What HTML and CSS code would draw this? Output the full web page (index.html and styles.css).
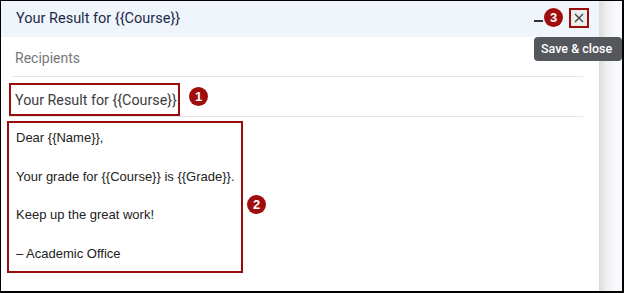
FILE: index.html
```html
<!DOCTYPE html>
<html>
<head>
<meta charset="utf-8">
<link rel="stylesheet" href="styles.css">
</head>
<body>
<div class="frame">
  <div class="panel">
    <div class="header">
      <div class="title">Your Result for {{Course}}</div>
      <div class="controls">
        <span class="minimize"></span>
        <span class="close">
          <svg width="12" height="12" viewBox="0 0 12 12"><path d="M2 2 L10 10 M10 2 L2 10" stroke="#444" stroke-width="1.4" fill="none"/></svg>
        </span>
        <span class="badge badge3">3</span>
      </div>
    </div>
    <div class="row recipients">Recipients</div>
    <div class="row subject-row">
      <div class="subject">Your Result for {{Course}}</div>
      <span class="badge badge1">1</span>
    </div>
    <div class="body-wrap">
      <div class="body-box">
        <p>Dear {{Name}},</p>
        <p>Your grade for {{Course}} is {{Grade}}.</p>
        <p>Keep up the great work!</p>
        <p>– Academic Office</p>
      </div>
      <span class="badge badge2">2</span>
    </div>
  </div>
  <div class="shade"></div>
  <div class="side"></div>
  <div class="tooltip">Save &amp; close</div>
</div>
</body>
</html>
```
FILE: styles.css
```css
html, body { margin: 0; padding: 0; background: #fff; }
.frame {
  position: relative;
  width: 624px;
  height: 293px;
  box-sizing: border-box;
  border: 1px solid #000;
  border-right-width: 2px;
  border-bottom-width: 2px;
  display: flex;
  overflow: hidden;
  font-family: Roboto, "Liberation Sans", sans-serif;
}
.panel {
  width: 598px;
  display: flex;
  flex-direction: column;
  background: #fff;
}
.shade {
  width: 15px;
  background: linear-gradient(to right, #dcdcdc, #efefef 50%, #f7f7f7);
}
.side { flex: 1; background: #f8f9fe; }
.header {
  height: 36px;
  background: #f0f4fb;
  display: flex;
  align-items: center;
  justify-content: space-between;
  padding: 0 10px 0 15px;
}
.title {
  font-size: 14.5px;
  color: #1c2a48;
  font-weight: 400;
  padding-bottom: 1px;
}
.controls {
  position: relative;
  display: flex;
  align-items: center;
  gap: 26px;
  margin-top: -2px;
}
.minimize {
  width: 9px;
  height: 2px;
  background: #333;
  margin-top: 5px;
}
.close {
  width: 16px;
  height: 16px;
  border: 2px solid #9b0d0d;
  background: #ececec;
  display: flex;
  align-items: center;
  justify-content: center;
}
.badge {
  position: absolute;
  width: 19px;
  height: 19px;
  border-radius: 50%;
  background: #a00d0d;
  color: #fff;
  font-family: "Liberation Sans", Arial, sans-serif;
  font-weight: bold;
  font-size: 13px;
  line-height: 19px;
  text-align: center;
}
.badge3 { left: 10px; top: 0px; }
.row {
  margin: 0 16px 0 11px;
  border-bottom: 1px solid #e6e6e6;
  height: 39px;
  display: flex;
  align-items: center;
  font-size: 14px;
}
.recipients { color: #777; padding-left: 3px; padding-top: 3px; box-sizing: border-box; height: 40px; }
.subject-row { position: relative; margin-left: 8px; }
.subject {
  border: 2px solid #9b0d0d;
  height: 29px;
  box-sizing: content-box;
  display: flex;
  align-items: center;
  padding: 0 1px 0 4px;
  margin-top: 6px;
  color: #3c3c3c;
  font-size: 14.3px;
}
.badge1 { left: 180px; top: 10px; }
.body-wrap { position: relative; padding: 4px 0 0 6px; }
.body-box {
  border: 2px solid #9b0d0d;
  font-family: "Liberation Sans", Arial, sans-serif;
  font-size: 13px;
  color: #222;
  padding: 5px 0 0 7px;
  box-sizing: border-box;
  width: 236px;
  height: 152px;
  white-space: nowrap;
}
.body-box p { margin: 0 0 19.7px; line-height: 19px; }
.badge2 { left: 246px; top: 78px; }
.tooltip {
  position: absolute;
  left: 533px;
  top: 36px;
  width: 88px;
  height: 24px;
  background: #54585c;
  border-radius: 4px;
  color: #fff;
  font-size: 12.5px;
  font-weight: 500;
  line-height: 24px;
  padding-left: 7px;
  box-sizing: border-box;
}
```
